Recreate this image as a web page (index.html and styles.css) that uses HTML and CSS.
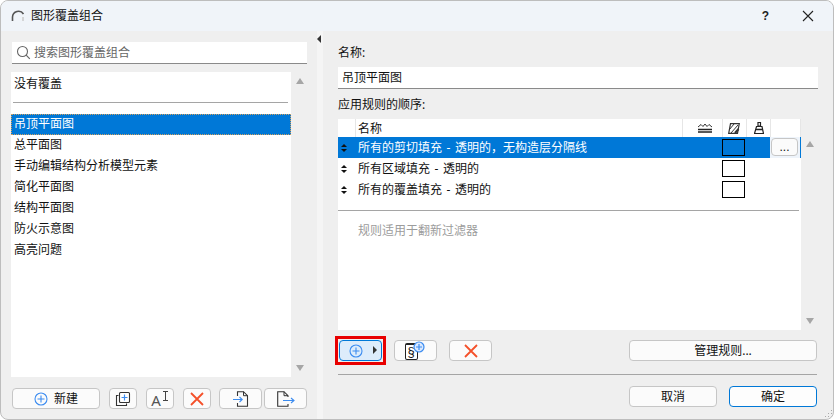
FILE: index.html
```html
<!DOCTYPE html>
<html lang="zh">
<head>
<meta charset="utf-8">
<title>图形覆盖组合</title>
<link rel="stylesheet" href="styles.css">
</head>
<body>
<div class="window">
  <header class="titlebar">
    <svg class="app-icon" width="14" height="14" viewBox="0 0 14 14"><path d="M1.500 12V8a6 6 0 0 1 11-3" fill="none" stroke="#555" stroke-width="1.600"/><path d="M12 8v4" stroke="#c8c8c8" stroke-width="1.400"/></svg>
    <span class="title">图形覆盖组合</span>
    <span class="help">?</span>
    <svg class="close" width="12" height="12" viewBox="0 0 12 12"><path d="M1 1l10 10M11 1L1 11" stroke="#222" stroke-width="1.100"/></svg>
  </header>
  <div class="body">
    <section class="left">
      <div class="search">
        <svg width="15" height="15" viewBox="0 0 15 15"><circle cx="6.500" cy="6.500" r="5" fill="none" stroke="#666" stroke-width="1.100"/><path d="M10.200 10.200l3.600 3.600" stroke="#666" stroke-width="1.200"/></svg>
        <span>搜索图形覆盖组合</span>
      </div>
      <div class="list-wrap">
        <div class="list">
          <div class="none">没有覆盖</div>
          <hr class="list-rule">
          <div class="item selected">吊顶平面图</div>
          <div class="item">总平面图</div>
          <div class="item">手动编辑结构分析模型元素</div>
          <div class="item">简化平面图</div>
          <div class="item">结构平面图</div>
          <div class="item">防火示意图</div>
          <div class="item">高亮问题</div>
        </div>
        <div class="scroll"><i class="up"></i><i class="down"></i></div>
      </div>
      <div class="left-buttons">
        <button class="btn new"><svg width="14" height="14" viewBox="0 0 14 14"><circle cx="7" cy="7" r="6" fill="none" stroke="#3c8cf0" stroke-width="1.100"/><path d="M7 3.500v7M3.500 7h7" stroke="#3c8cf0" stroke-width="1.100"/></svg>新建</button>
        <button class="btn sq"><svg width="16" height="16" viewBox="0 0 16 16"><path d="M3.500 4.500H1.500v10h10v-2" fill="none" stroke="#333" stroke-width="1.100"/><rect x="4.500" y="1.500" width="10" height="10" rx="1" fill="#fff" stroke="#333" stroke-width="1.100"/><path d="M9.500 3.500v6M6.500 6.500h6" stroke="#3c8cf0" stroke-width="1.200"/></svg></button>
        <button class="btn sq"><span class="glyph-a">A</span><svg class="ibeam" width="7" height="10" viewBox="0 0 7 10"><path d="M1 .5h5M1 9.500h5M3.500 .5v9" stroke="#444" fill="none"/></svg></button>
        <button class="btn sq"><svg width="14" height="14" viewBox="0 0 14 14"><path d="M1 1l12 12M13 1L1 13" stroke="#f4502a" stroke-width="1.800"/></svg></button>
        <button class="btn wide-a"><svg width="16" height="16" viewBox="0 0 16 16"><path d="M4.500 5V.7h6l4 4v10.600h-10V12" fill="none" stroke="#333" stroke-width="1.100"/><path d="M10.500 .7v4h4" fill="none" stroke="#333"/><path d="M0 8.500h9M6.500 6l2.700 2.500L6.500 11" fill="none" stroke="#3c8cf0" stroke-width="1.100"/></svg></button>
        <button class="btn wide-b"><svg width="18" height="16" viewBox="0 0 18 16"><path d="M11 6V4.700l-4-4H.7v14.600H11V13" fill="none" stroke="#333" stroke-width="1.100"/><path d="M7 .7v4h4" fill="none" stroke="#333"/><path d="M6 9.500h11M14 7l3 2.500L14 12" fill="none" stroke="#3c8cf0" stroke-width="1.100"/></svg></button>
      </div>
    </section>
    <div class="splitter"><i></i></div>
    <section class="right">
      <label class="field-label">名称:</label>
      <div class="name-input">吊顶平面图</div>
      <label class="field-label order">应用规则的顺序:</label>
      <div class="table-wrap">
        <div class="table">
          <div class="row head">
            <div class="c-handle"></div>
            <div class="c-name">名称</div>
            <div class="c-a"><svg width="14" height="10" viewBox="0 0 14 10"><path d="M0 4l3-2.500 2 2L7 1l2 2.500 2-2L14 4" fill="none" stroke="#333"/><path d="M0 6.500h14M0 9h14" stroke="#222" stroke-width="1.300"/></svg></div>
            <div class="c-b"><svg width="12" height="11" viewBox="0 0 12 11"><path d="M.7 10.400L2.500.6h8.800L9.500 10.400z" fill="#fff" stroke="#333" stroke-width="1.200"/><path d="M1.500 6.500L6 1M3 10l7-8" stroke="#333"/><path d="M7 10l3.500-4" stroke="#333" stroke-width="2"/></svg></div>
            <div class="c-c"><svg width="10" height="12" viewBox="0 0 10 12"><path d="M4 .5h2.500v3.500H4zM2.500 4.500h5.500l1.500 7H.5z" fill="#fff" stroke="#222" stroke-width="1.200"/><path d="M2 7.500h7" stroke="#222" stroke-width="1.400"/></svg></div>
            <div class="c-d"></div>
          </div>
          <div class="row active">
            <div class="c-handle"><span class="updown"><i></i><i></i></span></div>
            <div class="c-name">所有的剪切填充 - 透明的，无构造层分隔线</div>
            <div class="c-a"></div>
            <div class="c-b"><span class="check"></span></div>
            <div class="c-c"></div>
            <div class="c-d"><button class="more">...</button></div>
          </div>
          <div class="row">
            <div class="c-handle"><span class="updown"><i></i><i></i></span></div>
            <div class="c-name">所有区域填充 - 透明的</div>
            <div class="c-a"></div>
            <div class="c-b"><span class="check"></span></div>
            <div class="c-c"></div>
            <div class="c-d"></div>
          </div>
          <div class="row">
            <div class="c-handle"><span class="updown"><i></i><i></i></span></div>
            <div class="c-name">所有的覆盖填充 - 透明的</div>
            <div class="c-a"></div>
            <div class="c-b"><span class="check"></span></div>
            <div class="c-c"></div>
            <div class="c-d"></div>
          </div>
          <hr class="table-rule">
          <p class="hint">规则适用于翻新过滤器</p>
        </div>
        <div class="scroll table-scroll"><i class="up"></i><i class="down"></i></div>
      </div>
      <div class="rule-buttons">
        <div class="highlight">
          <button class="btn add"><svg class="add-plus" width="14" height="14" viewBox="0 0 14 14"><circle cx="7" cy="7" r="6" fill="none" stroke="#3c8cf0" stroke-width="1.100"/><path d="M7 3.500v7M3.500 7h7" stroke="#3c8cf0" stroke-width="1.100"/></svg><i class="caret"></i></button>
        </div>
        <button class="btn rule-add"><span class="sec">§</span><svg class="plus" width="12" height="12" viewBox="0 0 12 12"><circle cx="6" cy="6" r="5" fill="#d8e8ff" stroke="#3c8cf0" stroke-width="1.200"/><path d="M6 3v6M3 6h6" stroke="#3c8cf0" stroke-width="1.200"/></svg></button>
        <button class="btn rule-del"><svg width="14" height="14" viewBox="0 0 14 14"><path d="M1 1l12 12M13 1L1 13" stroke="#f4502a" stroke-width="1.800"/></svg></button>
        <button class="btn manage">管理规则...</button>
      </div>
      <hr class="bottom-rule">
      <div class="actions">
        <button class="btn action">取消</button>
        <button class="btn action primary">确定</button>
      </div>
    </section>
  </div>
  <svg class="grip" width="10" height="10" viewBox="0 0 10 10"><path d="M8 1h1v1H8zM5 4h1v1H5zM8 4h1v1H8zM2 7h1v1H2zM5 7h1v1H5zM8 7h1v1H8z" fill="#aaa"/></svg>
</div>
</body>
</html>
```
FILE: styles.css
```css
*, *::before, *::after { box-sizing: border-box; }
html, body { margin: 0; padding: 0; background: #fff; }
body { width: 834px; height: 420px; overflow: hidden; font: 12px/16px "Noto Sans", "Noto Sans CJK SC", sans-serif; color: #111; }
.window { position: relative; width: 834px; height: 420px; display: flex; flex-direction: column; background: #efefef; border: 1px solid #bdbdbd; border-radius: 8px; overflow: hidden; }
.titlebar { flex: none; height: 30px; display: flex; align-items: center; padding-left: 10px; background: #f0f4f9; }
.app-icon { margin-right: 6px; }
.title { flex: 1; font-size: 12px; }
.help { font: bold 12px "Liberation Sans", sans-serif; margin-right: 33px; color: #222; }
.close { margin-right: 19px; }
.body { flex: 1; display: flex; min-height: 0; }
.left { width: 316px; flex: none; padding: 10px 9px 0 10px; display: flex; flex-direction: column; }
.search { height: 22px; margin: 1px 0 0 1px; width: 295px; background: #fff; border-bottom: 1px solid #8a8a8a; display: flex; align-items: center; padding-left: 4px; color: #666; gap: 3px; }
.list-wrap { display: flex; height: 305px; margin-top: 8px; }
.list { width: 281px; background: #fff; padding-top: 3px; }
.none { padding-left: 3px; height: 18px; line-height: 18px; }
.list-rule { border: 0; border-top: 1px solid #a5a5a5; margin: 9px 3px 11px 2px; }
.item { height: 21px; line-height: 20px; padding-left: 3px; }
.item.selected { background: #0078d7; color: #fff; outline: 1px dotted #d0a060; outline-offset: -1px; width: 280px; }
.scroll { width: 18px; flex: none; position: relative; }
.up, .down { position: absolute; width: 0; height: 0; }
.scroll .up { left: 5px; top: 6px; border-left: 4.500px solid transparent; border-right: 4.500px solid transparent; border-bottom: 6px solid #a6a6a6; }
.scroll .down { left: 5px; bottom: 6px; border-left: 4.500px solid transparent; border-right: 4.500px solid transparent; border-top: 6px solid #a6a6a6; }
.left-buttons { display: flex; margin-top: 11px; padding-left: 1px; }
.btn { height: 21px; padding: 0; background: #fbfbfb; border: 1px solid #c6c6c6; border-radius: 4px; font: inherit; color: #111; display: flex; align-items: center; justify-content: center; position: relative; }
.new { width: 88px; gap: 6px; margin-right: 9px; }
.sq { width: 28px; margin-right: 9px; }
.sq:nth-child(4) { margin-right: 8px; }
.wide-a { width: 43px; margin-right: 2px; }
.wide-b { width: 43px; }
.glyph-a { font: 15px "Noto Sans", sans-serif; color: #555; margin-right: 1px; line-height: 16px; margin-top: 2px; }
.ibeam { margin-top: -6px; }
.splitter { width: 6px; flex: none; background: #f5f5f5; position: relative; }
.splitter i { position: absolute; left: 0; top: 4px; border-top: 4px solid transparent; border-bottom: 4px solid transparent; border-right: 4px solid #333; }
.right { flex: none; width: 495px; padding: 14px 0 0 15px; display: flex; flex-direction: column; }
.field-label { height: 16px; line-height: 16px; }
.name-input { width: 480px; height: 22px; margin-top: 6px; background: #fff; border-bottom: 1px solid #8a8a8a; padding-left: 4px; line-height: 21px; }
.order { margin-top: 8px; }
.table-wrap { display: flex; margin-top: 6px; height: 211px; width: 480px; }
.table { width: 463px; background: #fff; }
.row { display: flex; height: 21px; align-items: center; }
.row.head { height: 18px; }
.head > div { height: 18px; line-height: 16px; display: flex; align-items: center; justify-content: center; }
.c-handle { width: 19px; flex: none; display: flex; align-items: center; justify-content: center; }
.c-name { width: 325px; flex: none; padding-left: 1px; word-spacing: 1.500px; }
.head .c-handle { width: 18px; border-right: 1px solid #e6e6e6; }
.head .c-name { width: 326px; padding: 2px 0 0 2px; justify-content: flex-start; }
.c-a { width: 40px; flex: none; }
.c-b { width: 24px; flex: none; display: flex; justify-content: center; }
.c-c { width: 24px; flex: none; }
.c-d { width: 31px; flex: none; height: 100%; }
.head .c-a, .head .c-b, .head .c-c, .head .c-d { border-left: 1px solid #e6e6e6; }
.head .c-a { padding-left: 4px; }
.head .c-b { padding-right: 1px; }
.head .c-d { border-right: 1px solid #e6e6e6; }
.row.active { background: #0078d7; color: #fff; }
.check { display: block; width: 23px; height: 17px; border: 1px solid #000; }
.row .c-b { padding-right: 1px; }
.updown { display: flex; flex-direction: column; gap: 2px; margin-left: -7px; }
.updown i { width: 0; height: 0; border-left: 3px solid transparent; border-right: 3px solid transparent; }
.updown i:first-child { border-bottom: 3px solid #111; }
.updown i:last-child { border-top: 3px solid #111; }
.c-d .more { display: block; width: 27px; height: 18px; margin: 1px 0 0 1px; padding: 0; background: #fbfbfb; border: 1px solid #c6c6c6; border-radius: 4px; font: 12px "Liberation Sans", sans-serif; color: #111; }
.active .c-d { background: #eef4fb; border-right: 1px solid #0078d7; }
.table-rule { border: 0; border-top: 1px solid #a5a5a5; margin: 10px 2px 0 0; }
.hint { margin: 12px 0 0 20px; color: #9c9c9c; }
.table-scroll .up { left: 5px; top: 22px; }
.rule-buttons { display: flex; align-items: center; height: 29px; margin-top: 6px; }
.highlight { position: relative; width: 43px; height: 21px; margin-left: 1px; margin-right: 12px; }
.highlight::after { content: ""; position: absolute; left: -4px; top: -4px; width: 51px; height: 29px; border: 3px solid #e80000; }
.add { width: 43px; background: #ddecfb; border-color: #0078d7; }
.add-plus { margin-right: 10px; }
.caret { position: absolute; right: 4px; top: 5px; border-top: 4px solid transparent; border-bottom: 4px solid transparent; border-left: 4px solid #333; }
.rule-add { width: 43px; margin-right: 12px; }
.rule-add .sec { display: block; width: 13px; height: 17px; margin: 2px 0 0 -9px; border: 1px solid #222; border-top-width: 2px; border-radius: 2px; font: 13px/14px "Liberation Sans", sans-serif; text-align: center; background: #fff; }
.rule-add .plus { position: absolute; left: 18px; top: 0; }
.rule-del { width: 43px; margin-right: 137px; }
.manage { width: 188px; }
.bottom-rule { border: 0; border-top: 1px solid #a5a5a5; margin: 9px 0 0 0; width: 479px; }
.actions { display: flex; justify-content: flex-end; gap: 12px; margin-top: 11px; width: 479px; }
.action { width: 88px; }
.primary { border-color: #0078d7; background: #fdfdfd; }
.grip { position: absolute; right: 0; bottom: 0; }
```
